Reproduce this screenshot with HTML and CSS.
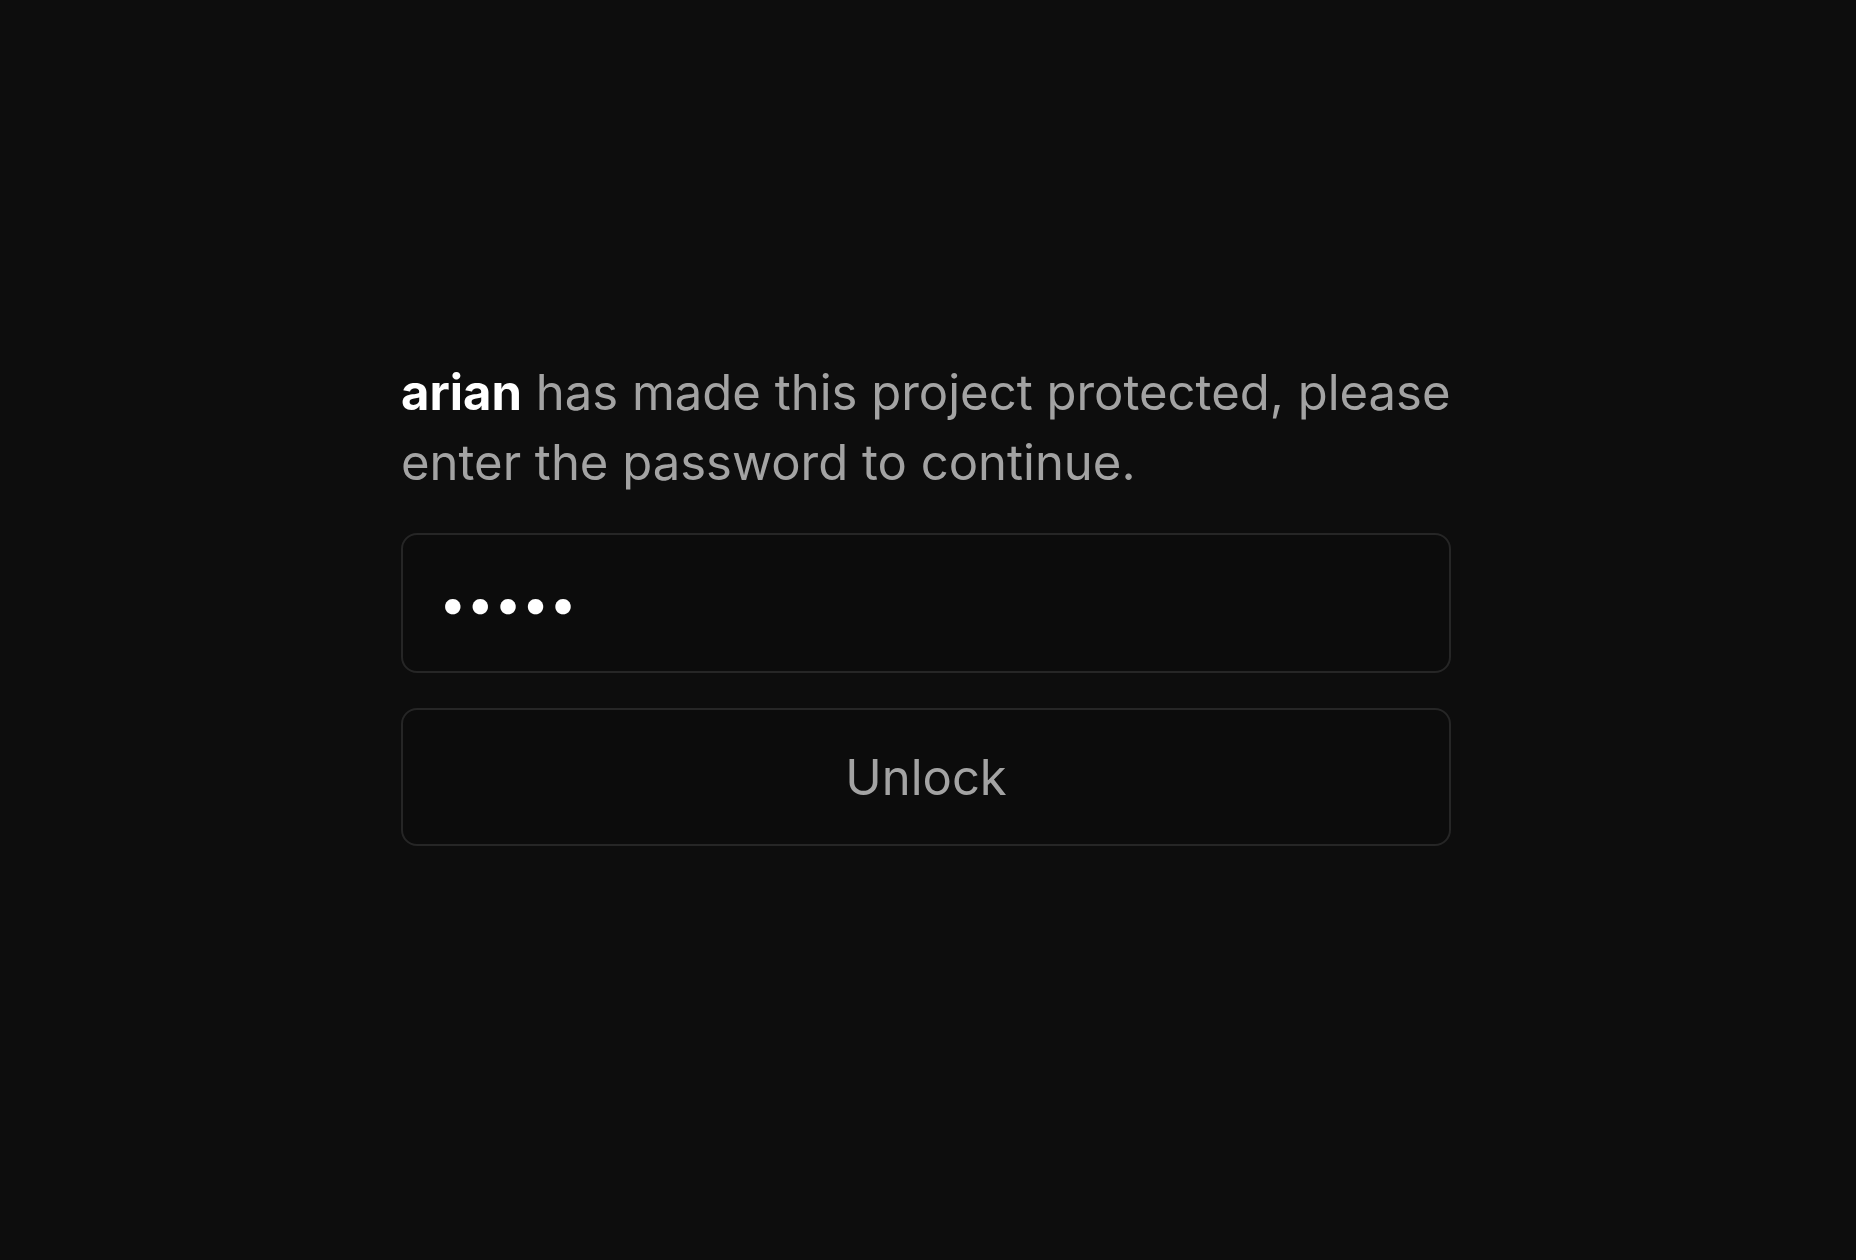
FILE: index.html
```html
<!DOCTYPE html>
<html lang="en">
<head>
<meta charset="utf-8">
<title>Protected project</title>
<link rel="stylesheet" href="styles.css">
</head>
<body>
<main class="page">
  <form class="lock-card" onsubmit="return false">
    <p class="lock-message"><strong class="owner">arian</strong> has made this project protected, please enter the password to continue.</p>
    <input class="password-input" type="password" value="12345" aria-label="Password">
    <button class="unlock-button" type="submit">Unlock</button>
  </form>
</main>
</body>
</html>
```
FILE: styles.css
```css
html, body {
  margin: 0;
  padding: 0;
  background: #0d0d0d;
  height: 100%;
}
body {
  font-family: Inter, "Noto Sans", sans-serif;
  color: #a1a1a1;
}
.page {
  display: flex;
  justify-content: center;
  padding-top: 358px;
  padding-right: 4px;
}
.lock-card {
  width: 1050px;
  display: flex;
  flex-direction: column;
}
.lock-message {
  margin: 0 0 35px;
  font-size: 49px;
  line-height: 70px;
  color: #a3a3a3;
}
.owner {
  color: #ffffff;
  font-weight: 700;
}
.password-input {
  box-sizing: border-box;
  height: 140px;
  width: 100%;
  margin: 0 0 35px;
  padding: 0 36px;
  background: #0c0c0c;
  border: 2px solid #262626;
  border-radius: 16px;
  color: #ffffff;
  font-family: Inter, sans-serif;
  font-size: 49px;
  outline: none;
}
.unlock-button {
  box-sizing: border-box;
  height: 138px;
  width: 100%;
  margin: 0;
  background: #0c0c0c;
  border: 2px solid #262626;
  border-radius: 16px;
  color: #a3a3a3;
  font-family: Inter, sans-serif;
  font-size: 49px;
  cursor: pointer;
}
```
